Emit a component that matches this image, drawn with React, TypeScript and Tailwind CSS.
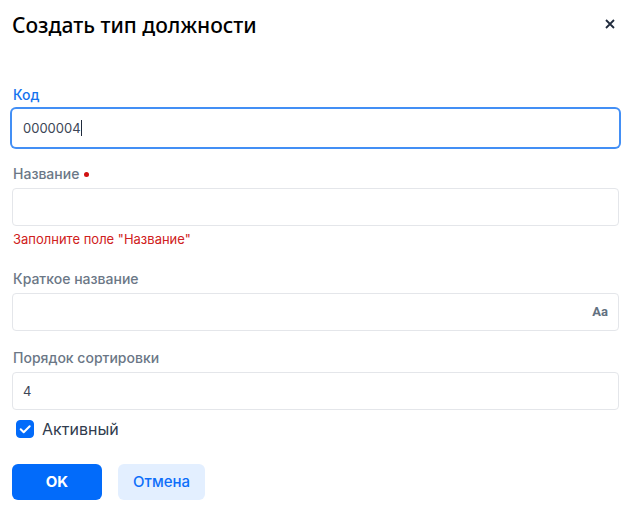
import { useState, type ReactNode } from "react";

const inputClass =
  "block h-[38px] w-full rounded-[4px] border border-[#e4e6ea] bg-white px-2.5 text-[13px] text-[#3c4656] outline-none";

type FieldProps = {
  id: string;
  label: string;
  active?: boolean;
  required?: boolean;
  error?: string;
  children: ReactNode;
};

function Field({ id, label, active, required, error, children }: FieldProps) {
  return (
    <div>
      <label
        htmlFor={id}
        className={`mb-1 ml-px flex items-center gap-[5px] text-[14px] leading-5 font-medium ${active ? "text-[#1473ee]" : "text-[#6b7786]"}`}
      >
        {label}
        {required && <span className="mt-px size-[5px] rounded-full bg-[#d01010]" />}
      </label>
      {children}
      {error && <p className="mt-[3px] ml-px pb-[3px] text-[13px] leading-5 text-[#cf2020]">{error}</p>}
    </div>
  );
}

export default function App() {
  const [code, setCode] = useState("0000004");
  const [name, setName] = useState("");
  const [shortName, setShortName] = useState("");
  const [order, setOrder] = useState("4");
  const [enabled, setEnabled] = useState(true);

  return (
    <form className="bg-white pt-2.5 pr-3.5 pb-4 pl-3 font-['Inter',sans-serif]" onSubmit={(e) => e.preventDefault()}>
      <header className="flex items-start justify-between">
        <h1 className="font-['Noto_Sans',sans-serif] text-[21px] leading-[30px] font-medium text-black">
          Создать тип должности
        </h1>
        <button type="button" aria-label="Закрыть" className="mt-[5px] flex size-[18px] items-center justify-center text-[#202b3d]">
          <svg width="10" height="10" viewBox="0 0 10 10" fill="none" stroke="currentColor" strokeWidth="1.8">
            <path d="M1 1l8 8M9 1L1 9" />
          </svg>
        </button>
      </header>

      <div className="mt-[45px] flex flex-col gap-[17px]">
        <Field id="code" label="Код" active>
          {/* sizer text keeps the caret right after the value */}
          <div className="relative">
            <input
              id="code"
              value={code}
              onChange={(e) => setCode(e.target.value)}
              className={`${inputClass} border-transparent caret-transparent ring-2 ring-[#438ff5]`}
            />
            <div aria-hidden="true" className="pointer-events-none absolute inset-y-0 left-[11px] flex items-center text-[13px]">
              <span className="invisible">{code}</span>
              <span className="h-4 w-px bg-[#202b3d]" />
            </div>
          </div>
        </Field>

        <Field id="name" label="Название" required error={'Заполните поле "Название"'}>
          <input id="name" value={name} onChange={(e) => setName(e.target.value)} className={inputClass} />
        </Field>

        <Field id="short-name" label="Краткое название">
          <div className="flex items-center rounded-[4px] border border-[#e4e6ea] pr-2.5">
            <input
              id="short-name"
              value={shortName}
              onChange={(e) => setShortName(e.target.value)}
              className="h-9 min-w-0 flex-1 px-2.5 text-[13px] text-[#3c4656] outline-none"
            />
            <button type="button" className="font-['Roboto',sans-serif] text-[13px] font-bold text-[#627080]">
              Aa
            </button>
          </div>
        </Field>

        <Field id="order" label="Порядок сортировки">
          <input id="order" value={order} onChange={(e) => setOrder(e.target.value)} className={inputClass} />
        </Field>
      </div>

      <label className="mt-2 ml-1 flex w-fit items-center gap-2 text-[16px] leading-[22px] text-[#303c4e]">
        <span className="relative size-[18px]">
          <input
            type="checkbox"
            checked={enabled}
            onChange={(e) => setEnabled(e.target.checked)}
            className="peer block size-[18px] appearance-none rounded-[4px] border border-[#c4cad3] checked:border-[#026bfa] checked:bg-[#026bfa]"
          />
          <svg
            className="pointer-events-none absolute inset-0 hidden peer-checked:block"
            width="18"
            height="18"
            viewBox="0 0 18 18"
            fill="none"
            stroke="white"
            strokeWidth="2"
            strokeLinecap="round"
            strokeLinejoin="round"
          >
            <path d="M4.7 9.2l3 3 6-6" />
          </svg>
        </span>
        Активный
      </label>

      <div className="mt-6 flex gap-4">
        <button type="submit" className="h-9 w-[90px] rounded-[6px] bg-[#026bfa] text-[15px] font-bold text-white">
          OK
        </button>
        <button type="button" className="h-9 rounded-[6px] bg-[#e3efff] px-[15px] text-[15px] font-medium text-[#0d6efa]">
          Отмена
        </button>
      </div>
    </form>
  );
}
